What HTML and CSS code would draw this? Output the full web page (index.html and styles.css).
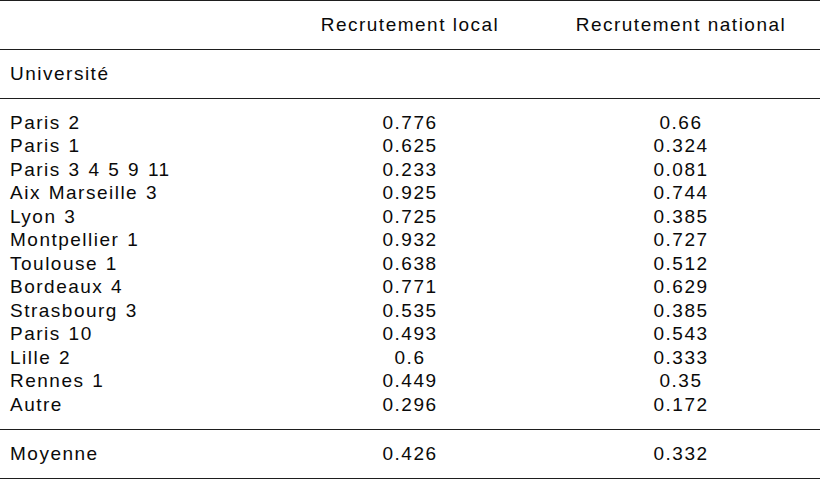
FILE: index.html
```html
<!DOCTYPE html>
<html lang="fr">
<head>
<meta charset="utf-8">
<title>Recrutement</title>
<link rel="stylesheet" href="styles.css">
</head>
<body>
<div class="table">
  <div class="row head">
    <div class="cell label"></div>
    <div class="cell num">Recrutement local</div>
    <div class="cell num">Recrutement national</div>
  </div>
  <div class="row section">
    <div class="cell label">Université</div>
    <div class="cell num"></div>
    <div class="cell num"></div>
  </div>
  <div class="body">
    <div class="line"><div class="cell label">Paris 2</div><div class="cell num">0.776</div><div class="cell num">0.66</div></div>
    <div class="line"><div class="cell label">Paris 1</div><div class="cell num">0.625</div><div class="cell num">0.324</div></div>
    <div class="line"><div class="cell label">Paris 3 4 5 9 11</div><div class="cell num">0.233</div><div class="cell num">0.081</div></div>
    <div class="line"><div class="cell label">Aix Marseille 3</div><div class="cell num">0.925</div><div class="cell num">0.744</div></div>
    <div class="line"><div class="cell label">Lyon 3</div><div class="cell num">0.725</div><div class="cell num">0.385</div></div>
    <div class="line"><div class="cell label">Montpellier 1</div><div class="cell num">0.932</div><div class="cell num">0.727</div></div>
    <div class="line"><div class="cell label">Toulouse 1</div><div class="cell num">0.638</div><div class="cell num">0.512</div></div>
    <div class="line"><div class="cell label">Bordeaux 4</div><div class="cell num">0.771</div><div class="cell num">0.629</div></div>
    <div class="line"><div class="cell label">Strasbourg 3</div><div class="cell num">0.535</div><div class="cell num">0.385</div></div>
    <div class="line"><div class="cell label">Paris 10</div><div class="cell num">0.493</div><div class="cell num">0.543</div></div>
    <div class="line"><div class="cell label">Lille 2</div><div class="cell num">0.6</div><div class="cell num">0.333</div></div>
    <div class="line"><div class="cell label">Rennes 1</div><div class="cell num">0.449</div><div class="cell num">0.35</div></div>
    <div class="line"><div class="cell label">Autre</div><div class="cell num">0.296</div><div class="cell num">0.172</div></div>
  </div>
  <div class="row foot">
    <div class="cell label">Moyenne</div>
    <div class="cell num">0.426</div>
    <div class="cell num">0.332</div>
  </div>
</div>
</body>
</html>
```

FILE: styles.css
```css
html, body {
  margin: 0;
  padding: 0;
  background: #ffffff;
}

body {
  font-family: "Liberation Sans", Arial, sans-serif;
  font-size: 19px;
  letter-spacing: 1.5px;
  color: #0a0a0a;
  width: 820px;
  height: 479px;
  overflow: hidden;
}

.table {
  width: 820px;
  display: flex;
  flex-direction: column;
}

.row,
.line {
  display: grid;
  grid-template-columns: 278px 264px 278px;
}

.row {
  height: 48px;
  align-items: center;
}

.head {
  border-top: 1px solid #1e1e1e;
  border-bottom: 1px solid #1e1e1e;
}

.section {
  border-bottom: 1px solid #1e1e1e;
}

.body {
  padding: 11.5px 0 13px;
}

.line {
  line-height: 23.5px;
}

.foot {
  border-top: 1px solid #1e1e1e;
  border-bottom: 1px solid #1e1e1e;
}

.label {
  padding-left: 10px;
  text-align: left;
  white-space: nowrap;
  word-spacing: 1px;
}

.num {
  text-align: center;
  white-space: nowrap;
}
```
